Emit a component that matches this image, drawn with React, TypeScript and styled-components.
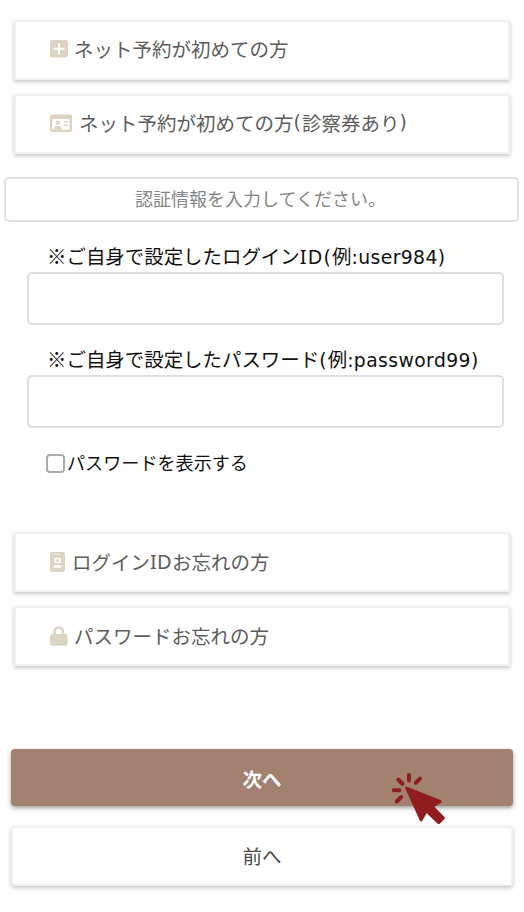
import React from "react";
import styled, { createGlobalStyle } from "styled-components";

const GlobalStyle = createGlobalStyle`
  *, *::before, *::after { box-sizing: border-box; }
  body {
    margin: 0;
    background: #fefefe;
    font-family: "Noto Sans CJK JP", "Noto Sans", sans-serif;
    font-weight: 400;
    color: #111;
  }
`;

const Page = styled.main`
  width: 524px;
  height: 912px;
  padding-top: 20px;
  overflow: hidden;
`;

const LinkList = styled.nav<{ $top?: number }>`
  display: flex;
  flex-direction: column;
  gap: 14px;
  margin: ${(p) => p.$top ?? 0}px 14px 0;
`;

const LinkCard = styled.a<{ $lift?: number }>`
  display: flex;
  align-items: center;
  height: 60px;
  padding: 0 0 ${(p) => p.$lift ?? 2}px 34px;
  border: 2px solid #f1f1f1;
  background: #fff;
  box-shadow: 0 2px 4px rgba(0, 0, 0, 0.22);
  color: #5c5c5c;
  font-size: 19.5px;
  line-height: 28px;
  white-space: nowrap;
`;

const Icon = styled.svg<{ $gap?: number }>`
  flex: none;
  margin-right: ${(p) => p.$gap ?? 5}px;
  fill: #ddd3c2;
`;

const Notice = styled.p`
  margin: 23px 5px 0 4px;
  height: 45px;
  padding: 0 2px 3px 0;
  display: flex;
  align-items: center;
  justify-content: center;
  border: 2px solid #e0e0e0;
  border-radius: 5px;
  background: #fff;
  color: #858585;
  font-size: 18px;
  line-height: 26px;
`;

const Form = styled.form`
  margin: 20px 20px 0 27px;
`;

const Field = styled.div`
  display: flex;
  flex-direction: column;
  height: 103px;
`;

const FieldLabel = styled.label`
  padding-left: 20px;
  font-size: 19.45px;
  line-height: 28px;
  height: 30px;
  white-space: nowrap;
`;

const Latin = styled.span`
  font-family: "DejaVu Sans", sans-serif;
  font-size: 18.8px;
  letter-spacing: 0.4px;
`;

const Paren = styled(Latin)`
  letter-spacing: 1.2px;
`;

const SerifedCaps = styled.span<{ $spacing?: number }>`
  font-family: "Noto Sans", sans-serif;
  font-size: 20px;
  letter-spacing: ${(p) => p.$spacing ?? 0.3}px;
`;

const TextInput = styled.input`
  width: 477px;
  height: 53px;
  border: 2px solid #dedede;
  border-radius: 5px;
  background: #fff;
  outline: none;
`;

const ToggleRow = styled.label`
  display: flex;
  align-items: center;
  height: 28px;
  padding-left: 19px;
  font-size: 18.1px;
  line-height: 26px;
`;

const Checkbox = styled.input`
  appearance: none;
  width: 19px;
  height: 19px;
  margin: 3px 2px 0 0;
  border: 2px solid #aaa;
  border-radius: 4px;
  background: #fff;
`;

const Actions = styled.div`
  display: flex;
  flex-direction: column;
  gap: 20px;
  margin: 83px 11px 0;
`;

const ActionButton = styled.button<{ $primary?: boolean }>`
  position: relative;
  height: ${(p) => (p.$primary ? 57 : 60)}px;
  padding: ${(p) => (p.$primary ? "3px 0 0" : "0 0 1px")};
  border: 2px solid ${(p) => (p.$primary ? "#a28170" : "#f1f1f1")};
  border-radius: 4px;
  background: ${(p) => (p.$primary ? "#a28170" : "#fff")};
  color: ${(p) => (p.$primary ? "#fff" : "#4c4c4c")};
  box-shadow: 0 2px 4px rgba(0, 0, 0, ${(p) => (p.$primary ? 0.38 : 0.22)});
  font-family: inherit;
  font-size: 19.5px;
  line-height: 28px;
  font-weight: ${(p) => (p.$primary ? 700 : 400)};
`;

const Pointer = styled.svg`
  position: absolute;
  left: 376px;
  top: 18px;
  z-index: 1;
  color: #911d20;
`;

const PlusIcon = () => (
  <Icon width="18" height="18" viewBox="0 0 18 18" $gap={6}>
    <rect width="18" height="17.5" rx="2" />
    <path d="M9 4.2v9.2M4.4 8.8h9.2" stroke="#fff" strokeWidth="2" strokeLinecap="round" />
  </Icon>
);

const IdCardIcon = () => (
  <Icon width="22" height="18" viewBox="0 0 22 18" $gap={7}>
    <path
      fillRule="evenodd"
      d="M2 .5H20A2 2 0 0 1 22 2.5V16A2 2 0 0 1 20 18H2A2 2 0 0 1 0 16V2.5A2 2 0 0 1 2 .5ZM2.4 5V15.8H19.6V5Z"
    />
    <circle cx="7.8" cy="8.8" r="2.3" />
    <path d="M3.8 15.8Q3.8 12 6.5 12H9Q11.8 12 11.8 15.8Z" />
    <path d="M13.5 7h4.8v1.6h-4.8zM13.5 10.5h4.8v1.6h-4.8z" />
  </Icon>
);

const IdBadgeIcon = () => (
  <Icon width="15" height="20" viewBox="0 0 15 20" $gap={7}>
    <rect width="15" height="20" rx="2" />
    <path d="M5 2.2h5" stroke="#f5f0e8" strokeWidth="1" strokeLinecap="round" />
    <rect x="4.4" y="5.8" width="6.2" height="5.2" rx="1" fill="#fff" />
    <circle cx="7.5" cy="8.4" r="1.5" />
    <path d="M3.5 15.8Q3.5 13 5.5 13H9.5Q11.5 13 11.5 15.8Z" fill="#fff" />
  </Icon>
);

const LockIcon = () => (
  <Icon width="18" height="20" viewBox="0 0 18 20" $gap={6}>
    <path
      fillRule="evenodd"
      d="M3.2 8V5.8A5.6 5.6 0 0 1 14.4 5.8V8H15.4A2.2 2.2 0 0 1 17.6 10.2V17.6A2.2 2.2 0 0 1 15.4 19.8H2.2A2.2 2.2 0 0 1 0 17.6V10.2A2.2 2.2 0 0 1 2.2 8ZM5.8 8H11.8V5.8A3 3 0 0 0 5.8 5.8Z"
    />
  </Icon>
);

const ClickPointer = () => (
  <Pointer width="58" height="58" viewBox="0 0 58 58" aria-hidden="true">
    <path
      d="M17.5 17.5 52 31.2Q53.8 32.2 52.3 33.6L45.5 37.7 55.7 48.2Q56.3 49 55.7 49.8L50.8 54.8Q49.7 55.7 48.7 54.8L37.7 44.2 33.1 52Q31.8 53.3 30.8 51.6L16.2 19.3Q15.9 17 17.5 17.5Z"
      fill="currentColor"
    />
    <path
      d="M20 6V11.5M31 9.7 26.8 13.9M9.3 10.7 13.5 14.8M4.8 21.3H10.3M7.8 32.5 12.2 28"
      fill="none"
      stroke="currentColor"
      strokeWidth="4"
      strokeLinecap="round"
    />
  </Pointer>
);

export default function App() {
  return (
    <>
      <GlobalStyle />
      <Page>
        <LinkList>
          <LinkCard>
            <PlusIcon />
            ネット予約が初めての方
          </LinkCard>
          <LinkCard>
            <IdCardIcon />
            ネット予約が初めての方<Paren>(</Paren>診察券あり<Paren>)</Paren>
          </LinkCard>
        </LinkList>
        <Notice>認証情報を入力してください。</Notice>
        <Form>
          <Field>
            <FieldLabel htmlFor="login">
              ※ご自身で設定したログイン<SerifedCaps $spacing={1.2}>ID</SerifedCaps>
              <Paren>(</Paren>例<Latin>:user984</Latin>
              <Paren>)</Paren>
            </FieldLabel>
            <TextInput id="login" />
          </Field>
          <Field>
            <FieldLabel htmlFor="password">
              ※ご自身で設定したパスワード<Paren>(</Paren>例
              <Latin>:password99</Latin>
              <Paren>)</Paren>
            </FieldLabel>
            <TextInput id="password" type="password" />
          </Field>
          <ToggleRow>
            <Checkbox type="checkbox" />
            パスワードを表示する
          </ToggleRow>
        </Form>
        <LinkList $top={56}>
          <LinkCard $lift={0}>
            <IdBadgeIcon />
            ログイン<SerifedCaps>ID</SerifedCaps>お忘れの方
          </LinkCard>
          <LinkCard $lift={0}>
            <LockIcon />
            パスワードお忘れの方
          </LinkCard>
        </LinkList>
        <Actions>
          <ActionButton $primary>
            次へ
            <ClickPointer />
          </ActionButton>
          <ActionButton>前へ</ActionButton>
        </Actions>
      </Page>
    </>
  );
}
